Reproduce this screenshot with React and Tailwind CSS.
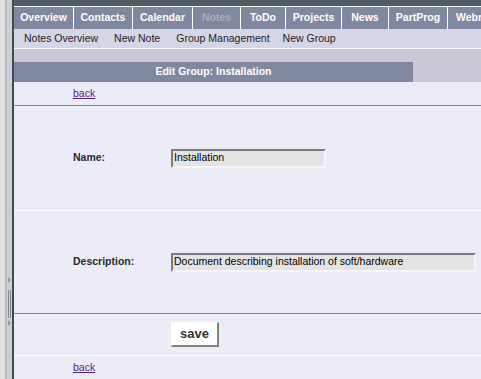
import React from "react";

const tabs = [
  { t: "Overview", w: "w-[59px]", first: true },
  { t: "Contacts", w: "w-[59px]" },
  { t: "Calendar", w: "w-[60px]" },
  { t: "Notes", w: "w-[48px]", active: true },
  { t: "ToDo", w: "w-[45px]" },
  { t: "Projects", w: "w-[56px]" },
  { t: "News", w: "w-[47px]" },
  { t: "PartProg", w: "w-[59px]" },
  { t: "Webmail", w: "w-[60px]" },
];

export default function App() {
  return (
    <div className="flex h-[379px] w-[481px] overflow-hidden font-['Liberation_Sans',Arial,sans-serif] bg-[#ececf6]">
      {/* left frame */}
      <div className="flex h-full shrink-0">
        <div className="w-[5px] bg-[#e2e2e2]" />
        <div className="w-[2px] bg-[#b8bcc0]" />
        <div className="relative w-[5px] bg-[#c8d0d8]">
          <div className="absolute left-[1px] top-[277px] h-0 w-0 border-y-[3px] border-l-[3px] border-y-transparent border-l-[#8a96a4]" />
          <div className="absolute left-[1px] top-[290px] h-[28px] w-[1px] bg-[#7c8898]" />
          <div className="absolute left-[3px] top-[290px] h-[28px] w-[1px] bg-[#7c8898]" />
          <div className="absolute left-[1px] top-[320px] h-0 w-0 border-y-[3px] border-l-[3px] border-y-transparent border-l-[#8a96a4]" />
        </div>
        <div className="w-[2px] bg-[#414b52]" />
      </div>

      {/* main */}
      <div className="flex min-w-0 flex-1 flex-col">
        <div className="h-[6px] shrink-0 bg-[#505c64]" />
        <div className="h-[1px] shrink-0 bg-white" />
        {/* tabs */}
        <div className="flex h-[22px] shrink-0 whitespace-nowrap bg-[#8088a0]">
          {tabs.map((x) => (
            <div
              key={x.t}
              className={`${x.w} flex shrink-0 items-center justify-center text-[10.5px] font-bold ${
                x.first ? "" : "border-l border-white"
              } ${x.active ? "text-[#a9adc2]" : "text-white"}`}
            >
              {x.t}
            </div>
          ))}
        </div>
        {/* submenu */}
        <div className="flex h-[19px] shrink-0 items-center whitespace-nowrap bg-[#d4d6e6] text-[10.5px] text-[#1c1c24]">
          <span className="ml-[10px]">Notes Overview</span>
          <span className="ml-[16px]">New Note</span>
          <span className="ml-[16px]">Group Management</span>
          <span className="ml-[13px]">New Group</span>
        </div>
        <div className="h-[1px] shrink-0 bg-white" />
        {/* header */}
        <div className="shrink-0 bg-[#ccc8d6] pt-[13px]">
          <div className="flex h-[20px] w-[399px] items-center justify-center bg-[#8088a0] text-[10.5px] font-bold text-white">
            Edit Group: Installation
          </div>
        </div>
        {/* back row */}
        <div className="flex h-[23px] shrink-0 items-center pl-[59px]">
          <a href="#" className="text-[10.5px] text-[#551a8b] underline">back</a>
        </div>
        <div className="h-[1px] shrink-0 bg-[#8088a0]" />
        {/* name row */}
        <div className="flex h-[104px] shrink-0 items-center pl-[59px]">
          <div className="w-[98px] text-[10.5px] font-bold text-[#2a2a30]">Name:</div>
          <div className="flex h-[19px] w-[155px] items-center border-2 border-t-[#7c7c80] border-l-[#7c7c80] border-b-[#f6f6fa] border-r-[#f6f6fa] bg-[#e4e4e4] pl-[1px] text-[10.5px] text-black">
            Installation
          </div>
        </div>
        <div className="h-[1px] shrink-0 bg-white" />
        {/* description row */}
        <div className="flex h-[102px] shrink-0 items-center pl-[59px]">
          <div className="w-[98px] text-[10.5px] font-bold text-[#2a2a30]">Description:</div>
          <div className="flex h-[19px] w-[305px] items-center border-2 border-t-[#7c7c80] border-l-[#7c7c80] border-b-[#f6f6fa] border-r-[#f6f6fa] bg-[#e4e4e4] pl-[1px] text-[10.5px] whitespace-nowrap text-black">
            Document describing installation of soft/hardware
          </div>
        </div>
        <div className="h-[1px] shrink-0 bg-[#8088a0]" />
        {/* save row */}
        <div className="flex h-[41px] shrink-0 items-center pl-[157px]">
          <button className="flex h-[25px] w-[48px] items-center justify-center border-t border-l border-t-white border-l-white border-r-2 border-b-2 border-r-[#808080] border-b-[#808080] bg-white text-[13px] font-bold text-[#333]">
            save
          </button>
        </div>
        <div className="h-[1px] shrink-0 bg-white" />
        {/* back row bottom */}
        <div className="flex h-[23px] shrink-0 items-center pl-[59px]">
          <a href="#" className="text-[10.5px] text-[#551a8b] underline">back</a>
        </div>
      </div>
    </div>
  );
}
